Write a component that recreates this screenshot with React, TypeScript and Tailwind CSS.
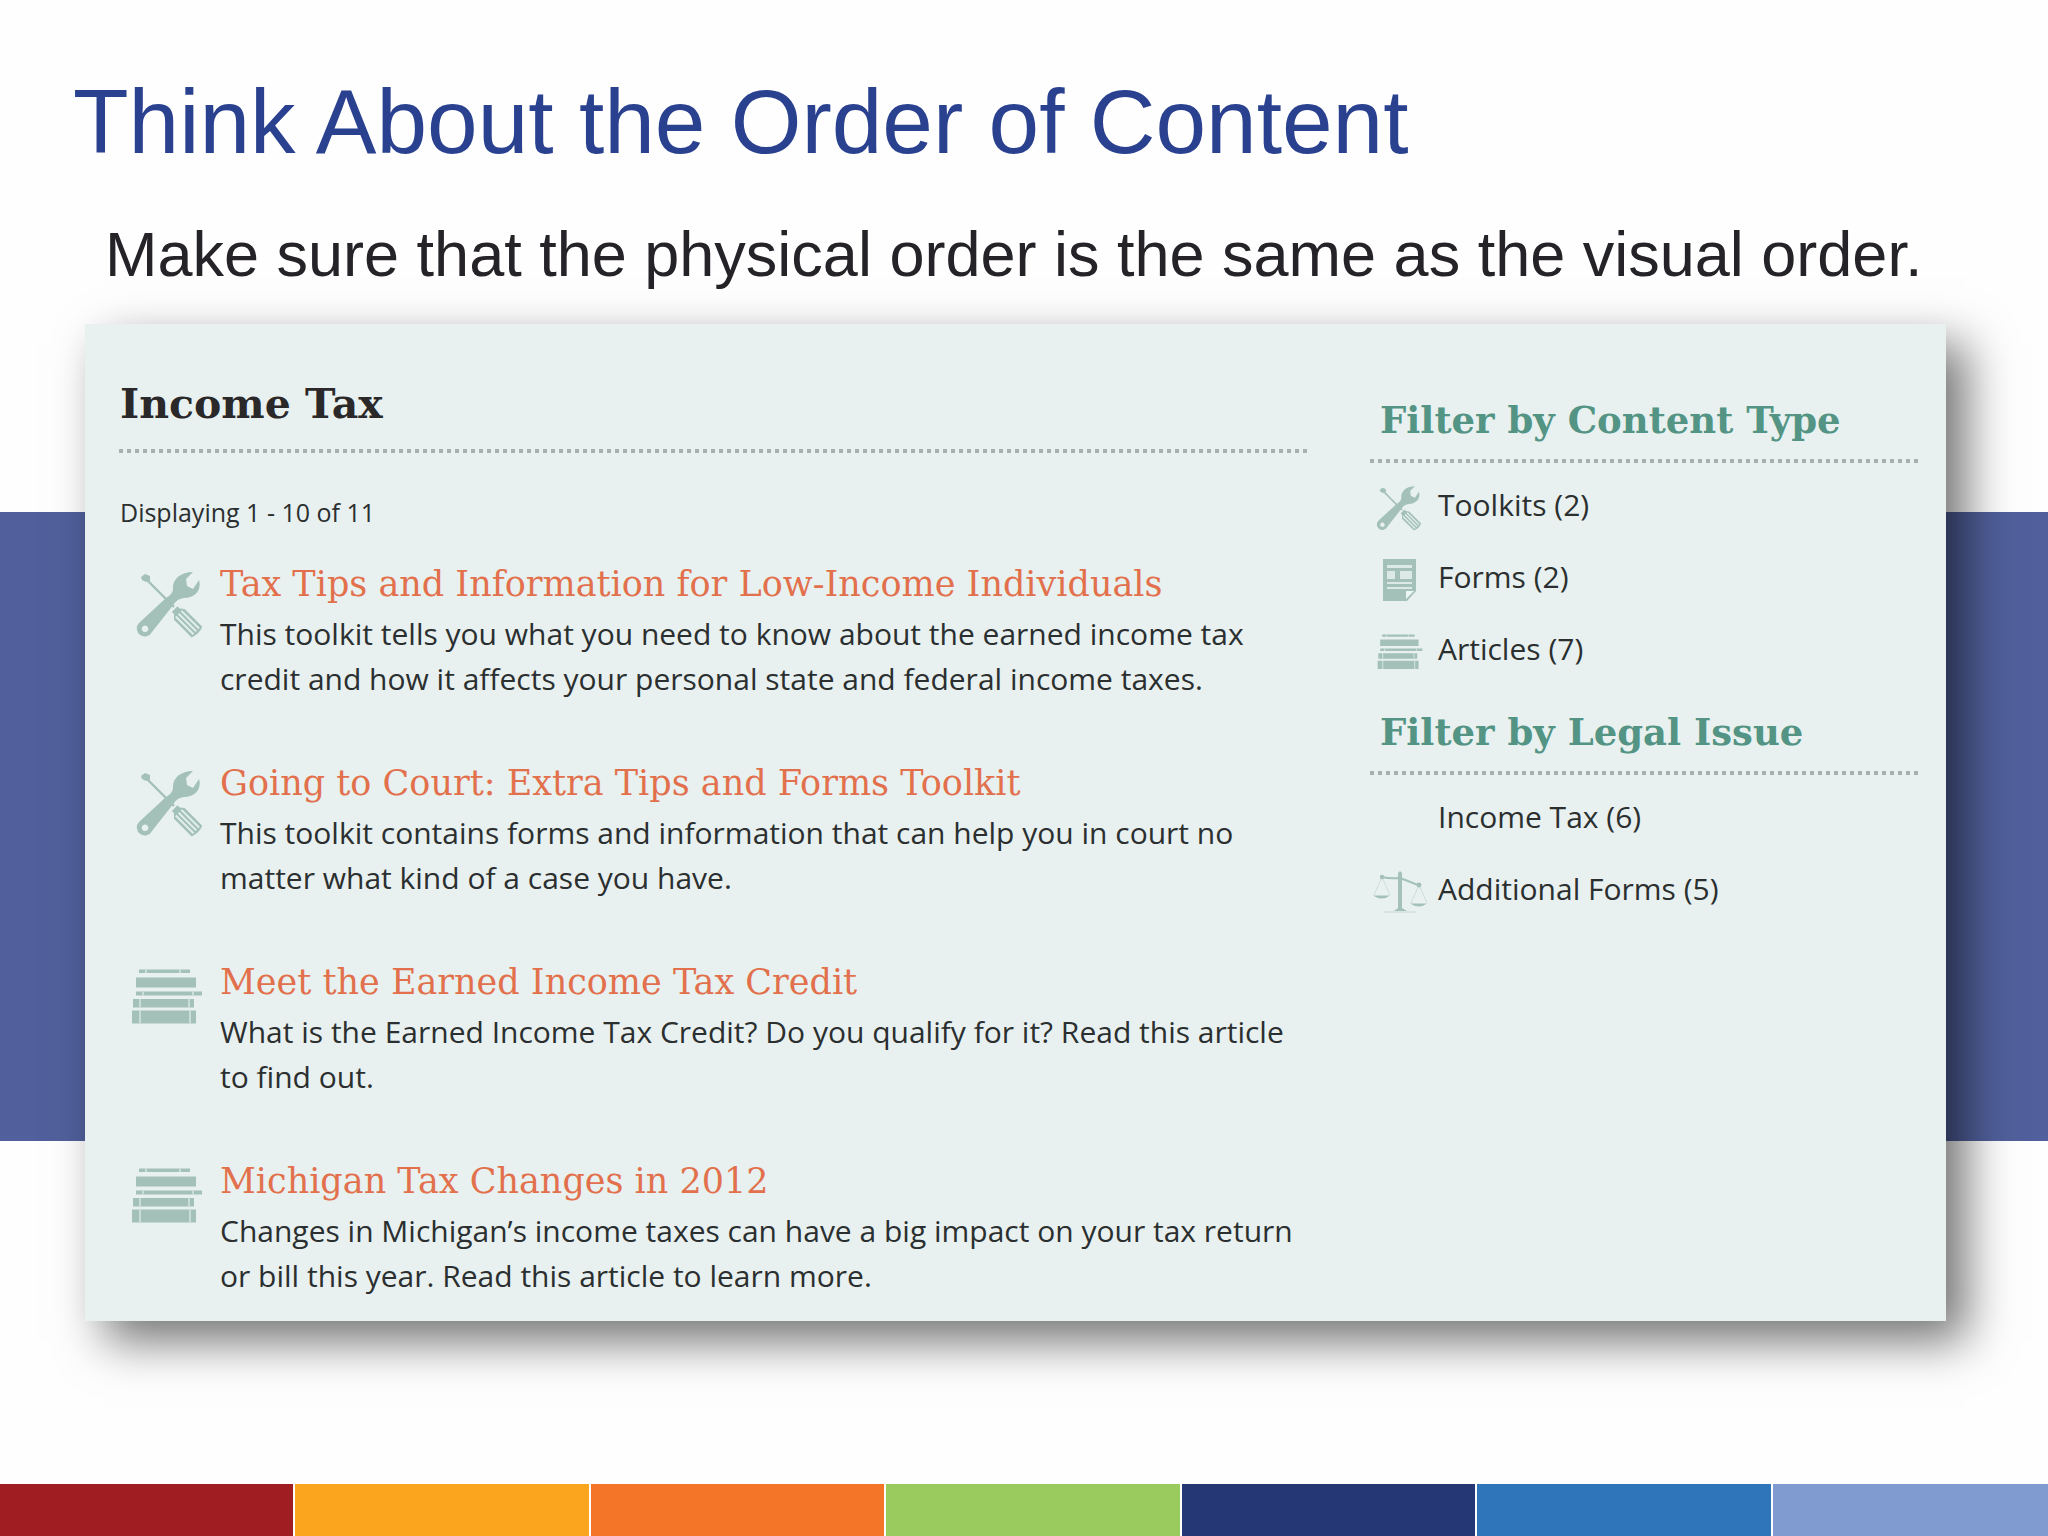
import clsx from "clsx";

type IconName = "tools" | "form" | "books" | "scales";

interface Result {
  title: string;
  lines: string[];
  icon: IconName;
}

interface Filter {
  label: string;
  count: number;
  icon?: IconName;
}

const results: Result[] = [
  {
    title: "Tax Tips and Information for Low-Income Individuals",
    lines: [
      "This toolkit tells you what you need to know about the earned income tax",
      "credit and how it affects your personal state and federal income taxes.",
    ],
    icon: "tools",
  },
  {
    title: "Going to Court: Extra Tips and Forms Toolkit",
    lines: [
      "This toolkit contains forms and information that can help you in court no",
      "matter what kind of a case you have.",
    ],
    icon: "tools",
  },
  {
    title: "Meet the Earned Income Tax Credit",
    lines: [
      "What is the Earned Income Tax Credit? Do you qualify for it? Read this article",
      "to find out.",
    ],
    icon: "books",
  },
  {
    title: "Michigan Tax Changes in 2012",
    lines: [
      "Changes in Michigan’s income taxes can have a big impact on your tax return",
      "or bill this year. Read this article to learn more.",
    ],
    icon: "books",
  },
];

const contentTypes: Filter[] = [
  { label: "Toolkits", count: 2, icon: "tools" },
  { label: "Forms", count: 2, icon: "form" },
  { label: "Articles", count: 7, icon: "books" },
];

const legalIssues: Filter[] = [
  { label: "Income Tax", count: 6 },
  { label: "Additional Forms", count: 5, icon: "scales" },
];

const footerColors = [
  "bg-[#a01e22]",
  "bg-[#fba51e]",
  "bg-[#f47527]",
  "bg-[#99cb5f]",
  "bg-[#263775]",
  "bg-[#2e75b9]",
  "bg-[#7f9bd0]",
];

function ToolsIcon({ className }: { className: string }) {
  return (
    <svg viewBox="16 18 70 68" className={className} aria-hidden="true">
      <path d="M28 29 54 55" stroke="#a3c0b9" strokeWidth="2.4" />
      <path d="M21 25 25 22 30 24 30 29 26 30 22 28Z" fill="#a3c0b9" />
      <g transform="rotate(45 54 55)">
        <path d="M56 52h3l4-3h25q3 7 0 15H63l-4-4h-3z" fill="#a3c0b9" />
        <path d="M62 52.500h25M62 56.500h25M62 60.500h25" stroke="#e2eeeb" strokeWidth="2" />
      </g>
      <path
        fill="#a3c0b9"
        fillRule="evenodd"
        d="M19 71 46 46Q53 42 53 37C52 28 60 20 73 20L66 27 67 34 73 37 79 28C82 38 75 46 64 46Q57 47 54 52L32 80A8 8 0 1 1 19 71ZM25 73.500a3.300 3.300 0 1 0 .1 0Z"
      />
    </svg>
  );
}

function BooksIcon({ className }: { className: string }) {
  return (
    <svg viewBox="11 20 72 57" className={className} aria-hidden="true">
      <path
        d="M19 21h51v3.500H19zM16 29h60v10H16zM16 43h66v4H16zM13 50.500h61v8.500H13zM12 62h64v13H12z"
        fill="#a3c0b9"
      />
      <path
        d="M26 21v3.500M60 21v3.500M23 43v4M73 43v4M20 50v9M69 50v9M20 62v13M70 62v13"
        stroke="#d3e4e0"
        strokeWidth="1.6"
      />
    </svg>
  );
}

function FormIcon({ className }: { className: string }) {
  return (
    <svg viewBox="0 0 34 42" className={className} aria-hidden="true">
      <path d="M0 0h33v32l-9 10H0z" fill="#a3c0b9" />
      <path d="M4 6h25v3H4zM4 12h8v8H4zM17 12h12v8H17zM4 23h25v2H4zM4 28h25v2H4z" fill="#dce9e6" />
      <path d="M23 40v-8h8z" fill="#eef6f4" />
    </svg>
  );
}

function ScalesIcon({ className }: { className: string }) {
  return (
    <svg viewBox="12 17 56 44" className={className} aria-hidden="true">
      <g fill="none" stroke="#a3c0b9">
        <path d="M22 24q8 2 18 1 8 3 18 7" strokeWidth="2" />
        <path d="M22 24 14 42M22 24l8 18M59 32l-8 18M59 32l8 18" strokeWidth=".7" opacity=".6" />
      </g>
      <g fill="#a3c0b9">
        <path d="M38 20 40 18l2 2v35l5 3H34l4-3z" />
        <circle cx="22" cy="24" r="2.200" />
        <circle cx="59" cy="32" r="2.400" />
        <path d="M13 42.500h17q-8 6-17 0zM50 50.500h17q-8 6-17 0z" />
        <path d="M24 58.500h32v1H24z" opacity=".5" />
      </g>
    </svg>
  );
}

function SmallIcon({ name }: { name: IconName }) {
  if (name === "tools") return <ToolsIcon className="h-[46px] w-12" />;
  if (name === "form") return <FormIcon className="h-[42px] w-[34px]" />;
  if (name === "books") return <BooksIcon className="h-[38px] w-[46px]" />;
  return <ScalesIcon className="h-11 w-14" />;
}

function DottedRule() {
  return (
    <hr className="h-1 border-0 bg-[repeating-linear-gradient(90deg,#a9b1af_0_4px,transparent_4px_8px)]" />
  );
}

function ResultItem({ result }: { result: Result }) {
  return (
    <li className="flex h-[199px]">
      <div className="w-[101px] shrink-0 pt-4 pl-[12px]">
        {result.icon === "tools" ? (
          <ToolsIcon className="ml-[5px] h-[68px] w-[70px]" />
        ) : (
          <BooksIcon className="h-[58px] w-[72px]" />
        )}
      </div>
      <div className="pt-[3px] whitespace-nowrap">
        <h3 className="font-['DejaVu_Serif',serif] text-[35px] leading-[54px] text-[#e2704c]">
          <a href="#">{result.title}</a>
        </h3>
        <p className="text-[30px] leading-[45px]">
          {result.lines[0]}
          <br />
          {result.lines[1]}
        </p>
      </div>
    </li>
  );
}

function FilterGroup({ title, filters }: { title: string; filters: Filter[] }) {
  return (
    <section>
      <h2 className="pb-[6px] pl-[10px] font-['DejaVu_Serif',serif] text-[37px] leading-[66px] font-bold whitespace-nowrap text-[#539484]">
        {title}
      </h2>
      <DottedRule />
      <ul className="pt-[9px]">
        {filters.map((f) => (
          <li key={f.label} className="flex h-[72px] items-center text-[30px]">
            <span className="flex w-[60px] justify-center">{f.icon && <SmallIcon name={f.icon} />}</span>
            <a href="#" className="pb-[7px] pl-[8px]">
              {f.label} ({f.count})
            </a>
          </li>
        ))}
      </ul>
    </section>
  );
}

export default function App() {
  return (
    <div className="flex min-h-screen flex-col overflow-hidden bg-[#fefefe] font-['Liberation_Sans',sans-serif]">
      <header className="h-[324px] whitespace-nowrap">
        <h1 className="pt-[70px] pl-[73px] text-[91px] leading-[104px] text-[#2a4190]">
          Think About the Order of Content
        </h1>
        <p className="pt-[44px] pl-[105px] text-[63px] leading-[72px] text-[#252327]">
          Make sure that the physical order is the same as the visual order.
        </p>
      </header>

      <div className="grid">
        <div className="col-start-1 row-start-1 mt-[188px] mb-[180px] bg-[#51609c]" />
        <main className="z-10 col-start-1 row-start-1 mr-[102px] ml-[85px] flex h-[997px] justify-between bg-[#e8f1ef] pr-[25px] pl-[34px] font-['Open_Sans',sans-serif] text-[#2b2f30] shadow-[20px_20px_45px_rgba(0,0,0,0.55)]">
          <section className="w-[1189px]">
            <h2 className="pt-[48px] pb-[13px] pl-[1px] font-['DejaVu_Serif',serif] text-[41px] leading-[64px] font-bold text-[#2a2829]">
              Income Tax
            </h2>
            <DottedRule />
            <p className="pt-[39px] pl-[1px] text-[25px] leading-[40px]">Displaying 1 - 10 of 11</p>
            <ul className="pt-[22px]">
              {results.map((r) => (
                <ResultItem key={r.title} result={r} />
              ))}
            </ul>
          </section>
          <aside className="flex w-[551px] flex-col gap-[11px] pt-[63px]">
            <FilterGroup title="Filter by Content Type" filters={contentTypes} />
            <FilterGroup title="Filter by Legal Issue" filters={legalIssues} />
          </aside>
        </main>
      </div>

      <footer className="mt-auto flex h-[52px] gap-[2px]">
        {footerColors.map((color, i) => (
          <div key={color} className={clsx(color, i < footerColors.length - 1 ? "flex-[16]" : "flex-[15]")} />
        ))}
      </footer>
    </div>
  );
}
